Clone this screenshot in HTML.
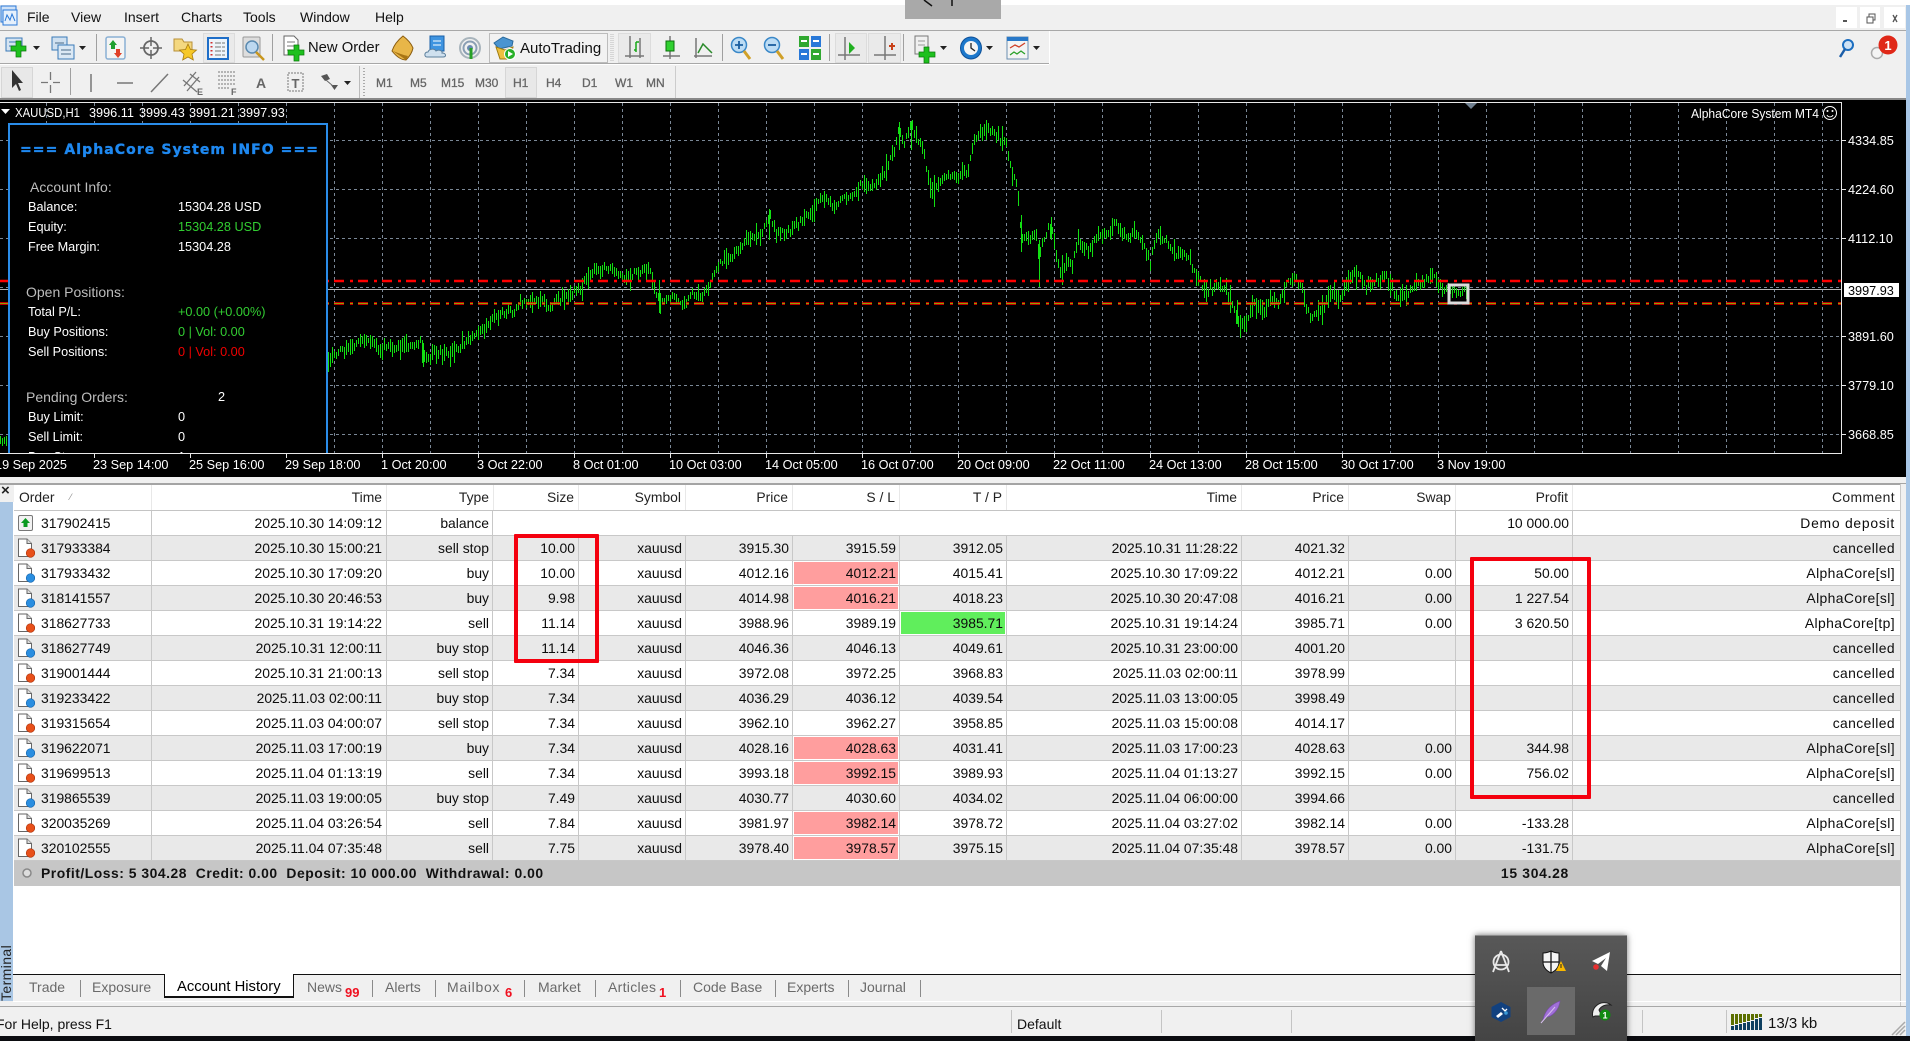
<!DOCTYPE html>
<html><head><meta charset="utf-8"><title>MT4</title>
<style>
html,body{margin:0;padding:0;width:1910px;height:1041px;overflow:hidden;background:#f0f0f0;font-family:"Liberation Sans",sans-serif;color:#000}
.a{position:absolute;white-space:nowrap}
.m{font-size:14px;top:9px;color:#111}
.tf{font-size:12px;top:76px;color:#666;-webkit-text-stroke:.3px #666}
#tb{position:absolute;left:14px;top:511px;border-collapse:separate;border-spacing:0;table-layout:fixed;width:1886px;font-size:13.9px}
#tb td{height:25px;box-sizing:border-box;padding:0 3px 1px 0;text-align:right;border-right:1px solid #c8c8c8;border-bottom:1px solid #c8c8c8;overflow:hidden;white-space:nowrap;color:#0c0c0c}
#tb tr:nth-child(even) td{background:#e9e9e9}
#tb td:last-child{border-right:0;padding-right:5px;letter-spacing:.4px}
#tb td:nth-child(2){padding-right:4px}
#tb td.o{text-align:left;padding-left:27px;position:relative}
#tb td.o svg{position:absolute;left:3px;top:2px}
#tb tr td.p{background:#ff9e9e;box-shadow:inset 0 0 0 1px #fff}
#tb tr td.g{background:#60ee5c;box-shadow:inset 0 0 0 1px #fff}
.h{position:absolute;top:485px;height:25px;line-height:25px;font-size:13.9px;text-align:right;box-sizing:border-box;padding-right:4px;border-right:1px solid #e8e8e8;color:#222}
.t{position:absolute;top:979px;font-size:14px;color:#6a6a6a;white-space:nowrap}
.r{position:absolute;font-size:13px;font-weight:bold;color:#f01020;top:985px}
.s{position:absolute;width:1px;top:980px;height:17px;background:#8a8a8a}
.st{position:absolute;width:1px;top:1010px;height:23px;background:#c4c4c4}
</style></head><body>
<svg width="0" height="0" style="position:absolute"><defs>
<symbol id="dr" viewBox="0 0 18 20"><path d="M1.5 1H10L14.500 5.500V18.500H1.500Z" fill="#fff" stroke="#666"/><path d="M10 1V5.500H14.500" fill="#ddd" stroke="#666"/><circle cx="13.500" cy="15" r="4.300" fill="#e8501a" stroke="#a83008" stroke-width=".6"/></symbol>
<symbol id="db" viewBox="0 0 18 20"><path d="M1.5 1H10L14.500 5.500V18.500H1.500Z" fill="#fff" stroke="#666"/><path d="M10 1V5.500H14.500" fill="#ddd" stroke="#666"/><circle cx="13.500" cy="15" r="4.300" fill="#2a8ee0" stroke="#1060a8" stroke-width=".6"/></symbol>
<symbol id="bl" viewBox="0 0 18 20"><rect x="1.500" y="2.500" width="14" height="15" rx="1.500" fill="#f2f2f2" stroke="#777"/><path d="M8.500 5L13 10H10.500V14H6.500V10H4Z" fill="#0a9a20"/></symbol>
</defs></svg>

<!-- window top -->
<div class="a" style="left:0;top:0;width:1910px;height:5px;background:#fff"></div>
<div class="a" style="left:905px;top:0;width:96px;height:19px;background:#a9a9a9"></div>
<div class="a" style="left:0;top:30px;width:1906px;height:1px;background:#a8a8a8"></div>
<div class="a" style="left:0;top:63px;width:1049px;height:1px;background:#a8a8a8"></div>
<div class="a" style="left:0;top:64px;width:1049px;height:1px;background:#fff"></div>
<div class="a" style="left:1049px;top:31px;width:1px;height:33px;background:#fff"></div>
<div class="a" style="left:0;top:98px;width:1906px;height:2px;background:#888"></div>
<div class="a" style="left:1906px;top:5px;width:4px;height:1036px;background:#a8c6e6"></div>
<div class="a" style="left:1836px;top:7px;width:21px;height:21px;background:#fff"></div>
<div class="a" style="left:1860px;top:7px;width:20px;height:21px;background:#fff"></div>
<div class="a" style="left:1884px;top:7px;width:21px;height:21px;background:#fff"></div>

<!-- menu -->
<div class="a m" style="left:27px">File</div><div class="a m" style="left:71px">View</div><div class="a m" style="left:124px">Insert</div><div class="a m" style="left:181px">Charts</div><div class="a m" style="left:243px">Tools</div><div class="a m" style="left:300px">Window</div><div class="a m" style="left:375px">Help</div>

<!-- toolbar buttons -->
<div class="a" style="left:203px;top:33px;width:30px;height:28px;background:#eaeaea;border:1px solid #dcdcdc"></div>
<div class="a" style="left:489px;top:33px;width:117px;height:28px;background:#f2f2f2;border:1px solid #bcbcbc"></div>
<div class="a" style="left:618px;top:33px;width:31px;height:28px;background:#eaeaea;border:1px solid #dcdcdc"></div>
<div class="a" style="left:835px;top:33px;width:30px;height:28px;background:#eaeaea;border:1px solid #dcdcdc"></div>
<div class="a" style="left:868px;top:33px;width:31px;height:28px;background:#eaeaea;border:1px solid #dcdcdc"></div>
<div class="a" style="left:1px;top:67px;width:30px;height:29px;background:#e8e8e8;border:1px solid #d6d6d6"></div>
<div class="a" style="left:505px;top:67px;width:30px;height:29px;background:#e8e8e8;border:1px solid #d6d6d6"></div>
<div class="a" style="left:308px;top:40px;font-size:14.800px;color:#111">New Order</div>
<div class="a" style="left:520px;top:40px;font-size:15px;color:#111">AutoTrading</div>
<div class="a tf" style="left:376px">M1</div><div class="a tf" style="left:410px">M5</div><div class="a tf" style="left:441px">M15</div><div class="a tf" style="left:475px">M30</div><div class="a tf" style="left:513px">H1</div><div class="a tf" style="left:546px">H4</div><div class="a tf" style="left:582px">D1</div><div class="a tf" style="left:615px">W1</div><div class="a tf" style="left:646px">MN</div>
<div class="a" style="left:256px;top:75px;font-size:14px;font-weight:bold;color:#666">A</div>

<svg class="a" style="left:0;top:0" width="1910" height="100" viewBox="0 0 1910 100">
<!-- magnifier fragment -->
<path d="M924 0L932 6M952 0V6" stroke="#111" stroke-width="1.500" fill="none"/>
<!-- app icon -->
<rect x="1" y="6" width="15" height="16" fill="#cfe2f8" stroke="#2a78d8"/><rect x="3" y="10" width="14" height="15" fill="#e6f0fc" stroke="#2a78d8"/><path d="M5 21l2-6 3 5 2-6 3 7" stroke="#2a78d8" fill="none"/>
<!-- window glyphs -->
<rect x="1843" y="20" width="4" height="2" fill="#555"/><path d="M1867 17h6v6h-6zM1869 17v-3h6v6h-2" fill="none" stroke="#555"/><path d="M1893 15l4 7M1897 15l-4 7" stroke="#555" stroke-width="1.300"/>
<!-- new chart -->
<rect x="6" y="38" width="16" height="13" fill="#d5e4f2" stroke="#3a7ab8"/><path d="M9 42h9M9 46h6" stroke="#3a7ab8"/><path d="M16 41h5v5h5v5h-5v6h-5v-6h-5v-5h5z" fill="#1ec01e" stroke="#0a7a0a" stroke-width=".7"/>
<path d="M33 46h7l-3.500 4z" fill="#222"/>
<!-- profiles -->
<rect x="52" y="37" width="15" height="13" fill="#cfe0f0" stroke="#3a7ab8"/><rect x="58" y="45" width="16" height="14" fill="#dbe8f4" stroke="#3a7ab8"/><path d="M55 43h9M61 50h10M61 54h10" stroke="#4a6a88"/>
<path d="M79 46h7l-3.500 4z" fill="#222"/>
<path d="M96.500 34V61M272.500 34V61M722.500 34V61M829.500 34V61M903.500 34V61" stroke="#a0a0a0"/>
<path d="M611 34V61M613 34V61" stroke="#bbb" stroke-dasharray="1 1"/>
<!-- market watch -->
<rect x="106" y="37" width="19" height="22" rx="2" fill="#f4f4f4" stroke="#8ab0d4" stroke-width="1.500"/><path d="M113 40l4 5h-2v4h-4v-4h-2z" fill="#20a030"/><path d="M118 58l-4-5h2v-4h4v4h2z" fill="#e04028"/>
<!-- navigator -->
<circle cx="151" cy="48" r="7" fill="none" stroke="#666" stroke-width="1.800"/><path d="M151 37v22M140 48h22" stroke="#666" stroke-width="1.500"/><circle cx="151" cy="48" r="2" fill="#f0f0f0"/>
<!-- star folder -->
<path d="M174 39h8l2 3h8v9h-18z" fill="#f4d880" stroke="#b89038"/><path d="M188 44l2.500 5.500 6 .6-4.500 4 1.300 5.900-5.300-3-5.300 3 1.300-5.900-4.500-4 6-.6z" fill="#f6c828" stroke="#a87c10" stroke-width=".8"/>
<!-- data window -->
<rect x="208" y="38" width="20" height="21" fill="#eef4fa" stroke="#1e6ec8" stroke-width="2"/><path d="M215 43h10M215 47h10M215 51h10M215 55h10" stroke="#777" stroke-dasharray="6 1"/><path d="M211.500 42v14" stroke="#d03030" stroke-dasharray="1.500 2.500" stroke-width="2"/>
<!-- tester -->
<rect x="243" y="37" width="17" height="20" rx="1" fill="#ddd" stroke="#999"/><circle cx="252" cy="47" r="6" fill="#bcd8f0" stroke="#5a8ab0" stroke-width="1.500"/><path d="M256 52l8 8" stroke="#c8961e" stroke-width="2.500"/>
<!-- new order -->
<path d="M284 36h10l4 4v15h-14z" fill="#fff" stroke="#666"/><path d="M287 42h8M287 46h8M287 50h6" stroke="#777"/><path d="M294 45h5v5h5v5h-5v6h-5v-6h-6v-5h6z" fill="#1ec01e" stroke="#0a7a0a" stroke-width=".7"/>
<!-- gold -->
<path d="M392 51c2-6 6-11 11-15 4 3 8 7 10 12-1 5-4 9-7 12-5 0-10-4-14-9z" fill="#e8b648" stroke="#8a5c10"/><path d="M393 51c4 3 9 6 13 9l2-4c-5-1-10-3-15-5z" fill="#a87414"/>
<!-- cloud -->
<rect x="430" y="36" width="14" height="15" fill="#3f94e0" stroke="#1a60a8"/><path d="M433 41h8M433 45h8" stroke="#fff"/><path d="M427 57c-3 0-3-5 1-5 1-3 6-4 8-1 3-2 7 0 6 2 4 0 5 4 1 4z" fill="#cfe0ee" stroke="#5c7f9c"/>
<!-- signals -->
<circle cx="470" cy="48" r="10" fill="none" stroke="#a8b4bc" stroke-width="2"/><circle cx="470" cy="48" r="6.500" fill="none" stroke="#8a9eb4" stroke-width="2"/><circle cx="470" cy="48" r="3" fill="#6a8ab0"/><path d="M471 48V59" stroke="#28a028" stroke-width="3"/>
<!-- autotrading -->
<path d="M494 43l9-6 10 4-1 5-13 3z" fill="#4a94d0" stroke="#2a6a9c"/><path d="M496 47l4 12h10l3-12-8 3z" fill="#eec040" stroke="#a07c10"/><circle cx="510" cy="54" r="5.500" fill="#28b028" stroke="#fff"/><path d="M508 51l5 3-5 3z" fill="#fff"/>
<!-- chart modes -->
<path d="M630 36V58M625 56H644M640 38V58" stroke="#777" stroke-width="1.500" fill="none"/><path d="M634 50h2M636 42V52M636 42h3" stroke="#18a818" stroke-width="1.500" fill="none"/>
<path d="M663 56H680M670 36V41M670 51V59" stroke="#777" stroke-width="1.500"/><rect x="666" y="41" width="8" height="10" fill="#30d030" stroke="#0a700a"/>
<path d="M696 38V58M694 56H712" stroke="#777" stroke-width="1.500"/><path d="M698 53l5-9 4 4 5 5" fill="none" stroke="#2a8a2a" stroke-width="1.500"/>
<!-- zooms -->
<circle cx="739" cy="45" r="7.500" fill="#bcdcf4" stroke="#3a88c8" stroke-width="1.500"/><path d="M735 45h8M739 41v8" stroke="#1a5ea0" stroke-width="1.800"/><path d="M744 51l6 8" stroke="#d0a028" stroke-width="3"/>
<circle cx="772" cy="45" r="7.500" fill="#bcdcf4" stroke="#3a88c8" stroke-width="1.500"/><path d="M768 45h8" stroke="#1a5ea0" stroke-width="1.800"/><path d="M777 51l6 8" stroke="#d0a028" stroke-width="3"/>
<rect x="799" y="36" width="10" height="11" fill="#30a830"/><rect x="811" y="36" width="10" height="11" fill="#2878d8"/><rect x="799" y="49" width="10" height="11" fill="#2878d8"/><rect x="811" y="49" width="10" height="11" fill="#30a830"/><path d="M801 41h6M813 41h6M801 54h6M813 54h6" stroke="#fff" stroke-width="2"/>
<path d="M845 37V60M838 55H860" stroke="#777" stroke-width="1.500"/><path d="M849 42l6 6-6 6z" fill="#20b020"/>
<path d="M885 36V60M874 55H896" stroke="#777" stroke-width="1.500"/><path d="M889 46h6M892 43v7" stroke="#c84018" stroke-width="2"/>
<!-- add indicator -->
<rect x="915" y="36" width="13" height="18" fill="#f0f0f0" stroke="#777"/><path d="M918 41h7M918 45h7" stroke="#999"/><path d="M924 47h5v5h6v5h-6v6h-5v-6h-5v-5h5z" fill="#1ec01e" stroke="#0a7a0a" stroke-width=".7"/>
<path d="M940 46h7l-3.500 4z" fill="#222"/>
<ellipse cx="971" cy="48" rx="10.500" ry="11" fill="#1c78cc" stroke="#0e5098"/><circle cx="971" cy="48" r="7" fill="#f4f4f4"/><path d="M971 43v5l4 3" stroke="#222" fill="none" stroke-width="1.300"/>
<path d="M986 46h7l-3.500 4z" fill="#222"/>
<rect x="1007" y="37" width="21" height="22" fill="#f4f4f4" stroke="#6a8eb0"/><rect x="1007" y="37" width="21" height="4" fill="#2878c8"/><path d="M1010 48l5-3 4 2 6-4" stroke="#d04028" fill="none" stroke-width="1.300"/><path d="M1010 55l4-3 3 2 4-3 4 3" stroke="#28a028" fill="none" stroke-width="1.300"/>
<path d="M1033 46h7l-3.500 4z" fill="#222"/>
<!-- search & notification -->
<circle cx="1848" cy="45" r="5" fill="#cfe2f4" stroke="#1c6ec0" stroke-width="2"/><path d="M1845 49l-5 8" stroke="#1c5ea8" stroke-width="2.500"/>
<circle cx="1877" cy="53" r="5.500" fill="#f4f4f4" stroke="#aaa" stroke-width="1.500"/><circle cx="1888" cy="45" r="9.500" fill="#e02818"/>
<text x="1888" y="50" font-family="Liberation Sans" font-size="13" font-weight="bold" fill="#fff" text-anchor="middle">1</text>
<!-- toolbar 2 -->
<path d="M12 70V88L16 84L19 91L21 90L18 83H23Z" fill="#333"/>
<path d="M50.500 72V80M50.500 85V93M41 82.500H48M53 82.500H60" stroke="#777" stroke-width="1.300"/>
<path d="M70.500 68V95" stroke="#a0a0a0"/><path d="M91 74V92" stroke="#777" stroke-width="1.500"/><path d="M117 83H133" stroke="#777" stroke-width="1.500"/><path d="M151 92L168 74" stroke="#777" stroke-width="1.500"/>
<path d="M184 86L196 72M187 91L199 77M183 80l14 12M190 74l10 8" stroke="#777" stroke-width="1.300" fill="none"/>
<text x="197" y="95" font-family="Liberation Sans" font-size="9" font-weight="bold" fill="#666">E</text>
<path d="M218 72H236M218 76H236M218 80H236M218 84H236M218 88H230" stroke="#777" stroke-dasharray="2 1"/>
<text x="231" y="95" font-family="Liberation Sans" font-size="9" font-weight="bold" fill="#666">F</text>
<rect x="288" y="73" width="15" height="18" fill="none" stroke="#777" stroke-dasharray="2 1"/>
<text x="295.500" y="88" font-family="Liberation Sans" font-size="13" font-weight="bold" fill="#666" text-anchor="middle">T</text>
<path d="M321 76l6-2 3 5-5 2zM331 85h7l-3.500 5z" fill="#555"/><path d="M326 80l7 6" stroke="#666"/>
<path d="M344 81h7l-3.500 4z" fill="#222"/>
<path d="M359.500 66V98" stroke="#bbb"/><path d="M364 68V96" stroke="#aaa" stroke-dasharray="1 2" stroke-width="2"/><path d="M675.500 66V98" stroke="#ccc"/>
</svg>

<!-- chart -->
<svg class="a" id="ch" style="left:0;top:100px" width="1906" height="377" viewBox="0 100 1906 377">
<rect x="0" y="100" width="1906" height="377" fill="#000"/>
<path d="M0 102.500H1841.500V453.500H0" fill="none" stroke="#e8e8e8"/>
<g id="grid" stroke="#7a8796" stroke-dasharray="3 3" fill="none">
<path d="M0 140.500H1841M0 189.500H1841M0 238.500H1841M0 287.500H1841M0 336.500H1841M0 385.500H1841M0 434.500H1841"/>
<path d="M46.500 103V453M94.500 103V453M142.500 103V453M190.500 103V453M238.500 103V453M286.500 103V453M334.500 103V453M382.500 103V453M430.500 103V453M478.500 103V453M526.500 103V453M574.500 103V453M622.500 103V453M670.500 103V453M718.500 103V453M766.500 103V453M814.500 103V453M862.500 103V453M910.500 103V453M958.500 103V453M1006.500 103V453M1054.500 103V453M1102.500 103V453M1150.500 103V453M1198.500 103V453M1246.500 103V453M1294.500 103V453M1342.500 103V453M1390.500 103V453M1438.500 103V453M1486.500 103V453M1534.500 103V453M1582.500 103V453M1630.500 103V453M1678.500 103V453M1726.500 103V453M1774.500 103V453M1822.500 103V453"/>
</g>
<path d="M0 289.500H1841" stroke="#b4b4b4"/>
<path id="bars" d="" stroke="#12e012" stroke-width="1" fill="none"/>
<path d="M-2 281H1841M-2 303.500H1841" stroke="#ff0000" stroke-width="2.400" stroke-dasharray="10 6 3 5"/>
<path d="M-2 303.500H1841" stroke="#8fa000" stroke-width="1" stroke-dasharray="10 6 3 5"/>
<rect x="1449" y="285" width="19" height="18" fill="none" stroke="#dcdcdc" stroke-width="3"/>
<path d="M1465 103h12l-6 6z" fill="#708090"/>
<path d="M94.500 454V458M190.500 454V458M286.500 454V458M382.500 454V458M478.500 454V458M574.500 454V458M670.500 454V458M766.500 454V458M862.500 454V458M958.500 454V458M1054.500 454V458M1150.500 454V458M1246.500 454V458M1342.500 454V458M1438.500 454V458" stroke="#e8e8e8"/>
<path d="M1842 140.500h4M1842 189.500h4M1842 238.500h4M1842 336.500h4M1842 385.500h4M1842 434.500h4" stroke="#e8e8e8"/>
<g font-family="Liberation Sans" font-size="12.700" fill="#fff">
<path d="M1 109h9l-4.500 5z" fill="#fff"/>
<text x="15" y="117" textLength="65" lengthAdjust="spacingAndGlyphs">XAUUSD,H1</text>
<text x="89" y="117">3996.11</text><text x="139" y="117">3999.43</text><text x="189" y="117">3991.21</text><text x="239" y="117">3997.93</text>
<text x="1691" y="118" textLength="128" lengthAdjust="spacingAndGlyphs">AlphaCore System MT4</text>
<g fill="none" stroke="#fff"><circle cx="1830" cy="113" r="6.500"/><path d="M1827 115c1 2.500 5 2.500 6 0"/></g><circle cx="1827.500" cy="111" r="1" fill="#fff"/><circle cx="1832.500" cy="111" r="1" fill="#fff"/>
<text x="1848" y="145">4334.85</text><text x="1848" y="194">4224.60</text><text x="1848" y="243">4112.10</text><text x="1848" y="341">3891.60</text><text x="1848" y="390">3779.10</text><text x="1848" y="439">3668.85</text>
<text x="67" y="469" text-anchor="end">19 Sep 2025</text>
<text x="93" y="469">23 Sep 14:00</text><text x="189" y="469">25 Sep 16:00</text><text x="285" y="469">29 Sep 18:00</text><text x="381" y="469">1 Oct 20:00</text><text x="477" y="469">3 Oct 22:00</text><text x="573" y="469">8 Oct 01:00</text><text x="669" y="469">10 Oct 03:00</text><text x="765" y="469">14 Oct 05:00</text><text x="861" y="469">16 Oct 07:00</text><text x="957" y="469">20 Oct 09:00</text><text x="1053" y="469">22 Oct 11:00</text><text x="1149" y="469">24 Oct 13:00</text><text x="1245" y="469">28 Oct 15:00</text><text x="1341" y="469">30 Oct 17:00</text><text x="1437" y="469">3 Nov 19:00</text>
<rect x="1844" y="283" width="55" height="14" fill="#fff"/><text x="1848" y="295" fill="#000">3997.93</text>
</g>
<!-- info panel -->
<svg x="8" y="123" width="321" height="330" viewBox="8 123 321 330">
<rect x="9" y="124" width="318" height="340" fill="#000" stroke="#2a8ce8" stroke-width="2"/>
<g font-family="Liberation Sans" font-size="12.700" fill="#fff">
<text x="20" y="154" font-family="DejaVu Sans" font-size="14" font-weight="bold" fill="#1e88f0" stroke="#1e88f0" stroke-width=".35" textLength="298" lengthAdjust="spacing">=== AlphaCore System INFO ===</text>
<text x="30" y="192" font-size="14" fill="#bdbdbd">Account Info:</text>
<text x="28" y="211">Balance:</text><text x="178" y="211">15304.28 USD</text>
<text x="28" y="231">Equity:</text><text x="178" y="231" fill="#32cd32">15304.28 USD</text>
<text x="28" y="251">Free Margin:</text><text x="178" y="251">15304.28</text>
<text x="26" y="297" font-size="14" fill="#bdbdbd">Open Positions:</text>
<text x="28" y="316">Total P/L:</text><text x="178" y="316" fill="#32cd32">+0.00 (+0.00%)</text>
<text x="28" y="336">Buy Positions:</text><text x="178" y="336" fill="#32cd32">0 | Vol: 0.00</text>
<text x="28" y="356">Sell Positions:</text><text x="178" y="356" fill="#f00000">0 | Vol: 0.00</text>
<text x="26" y="402" font-size="14" fill="#bdbdbd">Pending Orders:</text><text x="218" y="401">2</text>
<text x="28" y="421">Buy Limit:</text><text x="178" y="421">0</text>
<text x="28" y="441">Sell Limit:</text><text x="178" y="441">0</text>
<text x="28" y="461">Buy Stop:</text><text x="178" y="461">1</text>
</g></svg>
</svg>

<!-- terminal -->
<div class="a" style="left:0;top:484px;width:1900px;height:490px;background:#fff"></div>
<div class="a" style="left:0;top:483px;width:1906px;height:2px;background:#a4a4a4"></div>
<div class="a" style="left:0;top:485px;width:14px;height:17px;background:#f0f0f0"></div>
<div class="a" style="left:1px;top:482px;font-size:15px;font-weight:bold;color:#222">×</div>
<div class="a" style="left:0;top:502px;width:13px;height:499px;background:#a9c6e4"></div>
<div class="a" style="left:-1px;top:1001px;transform-origin:0 0;transform:rotate(-90deg);font-size:14px;color:#222;letter-spacing:.4px;height:14px;line-height:14px">Terminal</div>
<div class="a" style="left:1900px;top:484px;width:6px;height:522px;background:#f0f0f0;border-left:1px solid #c8c8c8;box-sizing:border-box"></div>

<!-- header -->
<div class="a" style="left:14px;top:510px;width:1886px;height:1px;background:#c4c4c4"></div>
<div class="h" style="left:14px;width:138px;text-align:left;padding-left:5px">Order</div>
<div class="a" style="left:70px;top:492px;font-size:9px;color:#888">⁄</div>
<div class="h" style="left:152px;width:235px">Time</div>
<div class="h" style="left:387px;width:107px">Type</div>
<div class="h" style="left:494px;width:85px">Size</div>
<div class="h" style="left:579px;width:107px">Symbol</div>
<div class="h" style="left:686px;width:107px">Price</div>
<div class="h" style="left:793px;width:107px">S / L</div>
<div class="h" style="left:900px;width:107px">T / P</div>
<div class="h" style="left:1007px;width:235px">Time</div>
<div class="h" style="left:1242px;width:107px">Price</div>
<div class="h" style="left:1349px;width:107px">Swap</div>
<div class="h" style="left:1456px;width:117px">Profit</div>
<div class="h" style="left:1573px;width:327px;border-right:0;padding-right:5px;letter-spacing:.4px">Comment</div>

<table id="tb"><colgroup><col style="width:138px"><col style="width:235px"><col style="width:106px"><col style="width:86px"><col style="width:107px"><col style="width:107px"><col style="width:107px"><col style="width:107px"><col style="width:235px"><col style="width:107px"><col style="width:107px"><col style="width:117px"><col style="width:327px"></colgroup>
<tr><td class="o"><svg width="18" height="20"><use href="#bl"/></svg>317902415</td><td>2025.10.30 14:09:12</td><td>balance</td><td colspan="8"></td><td>10 000.00</td><td style="letter-spacing:.75px">Demo deposit</td></tr>
<tr><td class="o"><svg width="18" height="20"><use href="#dr"/></svg>317933384</td><td>2025.10.30 15:00:21</td><td>sell stop</td><td>10.00</td><td>xauusd</td><td>3915.30</td><td>3915.59</td><td>3912.05</td><td>2025.10.31 11:28:22</td><td>4021.32</td><td></td><td></td><td>cancelled</td></tr>
<tr><td class="o"><svg width="18" height="20"><use href="#db"/></svg>317933432</td><td>2025.10.30 17:09:20</td><td>buy</td><td>10.00</td><td>xauusd</td><td>4012.16</td><td class="p">4012.21</td><td>4015.41</td><td>2025.10.30 17:09:22</td><td>4012.21</td><td>0.00</td><td>50.00</td><td>AlphaCore[sl]</td></tr>
<tr><td class="o"><svg width="18" height="20"><use href="#db"/></svg>318141557</td><td>2025.10.30 20:46:53</td><td>buy</td><td>9.98</td><td>xauusd</td><td>4014.98</td><td class="p">4016.21</td><td>4018.23</td><td>2025.10.30 20:47:08</td><td>4016.21</td><td>0.00</td><td>1 227.54</td><td>AlphaCore[sl]</td></tr>
<tr><td class="o"><svg width="18" height="20"><use href="#dr"/></svg>318627733</td><td>2025.10.31 19:14:22</td><td>sell</td><td>11.14</td><td>xauusd</td><td>3988.96</td><td>3989.19</td><td class="g">3985.71</td><td>2025.10.31 19:14:24</td><td>3985.71</td><td>0.00</td><td>3 620.50</td><td>AlphaCore[tp]</td></tr>
<tr><td class="o"><svg width="18" height="20"><use href="#db"/></svg>318627749</td><td>2025.10.31 12:00:11</td><td>buy stop</td><td>11.14</td><td>xauusd</td><td>4046.36</td><td>4046.13</td><td>4049.61</td><td>2025.10.31 23:00:00</td><td>4001.20</td><td></td><td></td><td>cancelled</td></tr>
<tr><td class="o"><svg width="18" height="20"><use href="#dr"/></svg>319001444</td><td>2025.10.31 21:00:13</td><td>sell stop</td><td>7.34</td><td>xauusd</td><td>3972.08</td><td>3972.25</td><td>3968.83</td><td>2025.11.03 02:00:11</td><td>3978.99</td><td></td><td></td><td>cancelled</td></tr>
<tr><td class="o"><svg width="18" height="20"><use href="#db"/></svg>319233422</td><td>2025.11.03 02:00:11</td><td>buy stop</td><td>7.34</td><td>xauusd</td><td>4036.29</td><td>4036.12</td><td>4039.54</td><td>2025.11.03 13:00:05</td><td>3998.49</td><td></td><td></td><td>cancelled</td></tr>
<tr><td class="o"><svg width="18" height="20"><use href="#dr"/></svg>319315654</td><td>2025.11.03 04:00:07</td><td>sell stop</td><td>7.34</td><td>xauusd</td><td>3962.10</td><td>3962.27</td><td>3958.85</td><td>2025.11.03 15:00:08</td><td>4014.17</td><td></td><td></td><td>cancelled</td></tr>
<tr><td class="o"><svg width="18" height="20"><use href="#db"/></svg>319622071</td><td>2025.11.03 17:00:19</td><td>buy</td><td>7.34</td><td>xauusd</td><td>4028.16</td><td class="p">4028.63</td><td>4031.41</td><td>2025.11.03 17:00:23</td><td>4028.63</td><td>0.00</td><td>344.98</td><td>AlphaCore[sl]</td></tr>
<tr><td class="o"><svg width="18" height="20"><use href="#dr"/></svg>319699513</td><td>2025.11.04 01:13:19</td><td>sell</td><td>7.34</td><td>xauusd</td><td>3993.18</td><td class="p">3992.15</td><td>3989.93</td><td>2025.11.04 01:13:27</td><td>3992.15</td><td>0.00</td><td>756.02</td><td>AlphaCore[sl]</td></tr>
<tr><td class="o"><svg width="18" height="20"><use href="#db"/></svg>319865539</td><td>2025.11.03 19:00:05</td><td>buy stop</td><td>7.49</td><td>xauusd</td><td>4030.77</td><td>4030.60</td><td>4034.02</td><td>2025.11.04 06:00:00</td><td>3994.66</td><td></td><td></td><td>cancelled</td></tr>
<tr><td class="o"><svg width="18" height="20"><use href="#dr"/></svg>320035269</td><td>2025.11.04 03:26:54</td><td>sell</td><td>7.84</td><td>xauusd</td><td>3981.97</td><td class="p">3982.14</td><td>3978.72</td><td>2025.11.04 03:27:02</td><td>3982.14</td><td>0.00</td><td>-133.28</td><td>AlphaCore[sl]</td></tr>
<tr><td class="o"><svg width="18" height="20"><use href="#dr"/></svg>320102555</td><td>2025.11.04 07:35:48</td><td>sell</td><td>7.75</td><td>xauusd</td><td>3978.40</td><td class="p">3978.57</td><td>3975.15</td><td>2025.11.04 07:35:48</td><td>3978.57</td><td>0.00</td><td>-131.75</td><td>AlphaCore[sl]</td></tr>
</table>

<!-- total -->
<div class="a" style="left:14px;top:861px;width:1886px;height:25px;background:#c6c6c6"></div>
<svg class="a" style="left:21px;top:867px" width="12" height="12"><circle cx="6" cy="6" r="4" fill="#ddd" stroke="#888" stroke-width="1.500"/></svg>
<div class="a" style="left:41px;top:865px;font-size:13.900px;font-weight:bold;color:#111;letter-spacing:.52px">Profit/Loss: 5 304.28&nbsp;&nbsp;Credit: 0.00&nbsp;&nbsp;Deposit: 10 000.00&nbsp;&nbsp;Withdrawal: 0.00</div>
<div class="a" style="left:1456px;width:113px;top:865px;font-size:13.900px;font-weight:bold;color:#111;text-align:right;letter-spacing:.7px">15 304.28</div>

<!-- red annotation boxes -->
<div class="a" style="left:514px;top:534px;width:85px;height:129px;box-sizing:border-box;border:4px solid #f4000e;border-radius:1px"></div>
<div class="a" style="left:1470px;top:557px;width:121px;height:242px;box-sizing:border-box;border:4px solid #f4000e;border-radius:1px"></div>

<!-- tabs -->
<div class="a" style="left:13px;top:974px;width:887px;height:32px;background:#f0f0f0"></div>
<div class="a" style="left:13px;top:974px;width:151px;height:1px;background:#111"></div>
<div class="a" style="left:294px;top:974px;width:1607px;height:1px;background:#111"></div>
<div class="a" style="left:164px;top:974px;width:130px;height:24px;box-sizing:border-box;background:#fff;border-left:1px solid #111;border-right:1px solid #111;border-bottom:2px solid #111"></div>
<div class="a" style="left:900px;top:975px;width:1000px;height:31px;background:#f0f0f0"></div>
<div class="a" style="left:13px;top:1001px;width:1893px;height:1px;background:#fff"></div>
<div class="a" style="left:0;top:1006px;width:1906px;height:1px;background:#a8a8a8"></div>
<div class="t" style="left:29px">Trade</div><div class="s" style="left:80px"></div>
<div class="t" style="left:92px">Exposure</div>
<div class="t" style="left:177px;color:#000;font-size:14.800px">Account History</div>
<div class="t" style="left:307px">News</div><div class="r" style="left:345px">99</div><div class="s" style="left:372px"></div>
<div class="t" style="left:385px">Alerts</div><div class="s" style="left:435px"></div>
<div class="t" style="left:447px;letter-spacing:.7px">Mailbox</div><div class="r" style="left:505px">6</div><div class="s" style="left:524px"></div>
<div class="t" style="left:538px">Market</div><div class="s" style="left:595px"></div>
<div class="t" style="left:608px;letter-spacing:.3px">Articles</div><div class="r" style="left:659px">1</div><div class="s" style="left:680px"></div>
<div class="t" style="left:693px">Code Base</div><div class="s" style="left:775px"></div>
<div class="t" style="left:787px">Experts</div><div class="s" style="left:848px"></div>
<div class="t" style="left:860px">Journal</div><div class="s" style="left:920px"></div>

<!-- status -->
<div class="a" style="left:-4px;top:1016px;font-size:14px;color:#111">For Help, press F1</div>
<div class="st" style="left:1011px"></div><div class="a" style="left:1017px;top:1016px;font-size:14px;color:#111">Default</div>
<div class="st" style="left:1161px"></div><div class="st" style="left:1291px"></div><div class="st" style="left:1642px"></div><div class="st" style="left:1726px"></div>
<svg class="a" style="left:1731px;top:1013px" width="32" height="18">
<g fill="#5c7000"><rect x="0" y="1" width="3" height="11"/><rect x="4" y="1" width="3" height="10"/><rect x="8" y="1" width="3" height="9"/><rect x="12" y="1" width="3" height="8"/><rect x="16" y="1" width="3" height="7"/><rect x="20" y="1" width="3" height="6"/><rect x="24" y="1" width="3" height="4"/><rect x="28" y="1" width="3" height="3"/></g>
<g fill="#0e3f60"><rect x="0" y="13" width="3" height="4"/><rect x="4" y="12" width="3" height="5"/><rect x="8" y="11" width="3" height="6"/><rect x="12" y="10" width="3" height="7"/><rect x="16" y="9" width="3" height="8"/><rect x="20" y="8" width="3" height="9"/><rect x="24" y="6" width="3" height="11"/><rect x="28" y="5" width="3" height="12"/></g></svg>
<div class="a" style="left:1768px;top:1015px;font-size:15px;color:#111">13/3 kb</div>
<svg class="a" style="left:1890px;top:1020px" width="16" height="16"><path d="M15 2L2 15M15 6L6 15M15 10L10 15" stroke="#aaa" stroke-width="1.500"/></svg>

<!-- taskbar -->
<div class="a" style="left:0;top:1036px;width:1910px;height:5px;background:#0b0c10"></div>

<!-- tray popup -->
<div class="a" style="left:1475px;top:935px;width:152px;height:106px;background:linear-gradient(#585858,#4c4c4c 60%,#444);box-shadow:0 0 6px rgba(0,0,0,.55);border-top:1px solid #8c8c8c;box-sizing:border-box"></div>
<div class="a" style="left:1527px;top:987px;width:48px;height:48px;background:#6a6a6a"></div>
<svg class="a" style="left:1475px;top:935px" width="152" height="106" viewBox="1475 935 152 106">
<g fill="none" stroke="#e8e8e8" stroke-width="1.800"><circle cx="1501" cy="962" r="7.500"/><path d="M1501 951L1493 972M1501 951L1509 972M1494 965H1508"/></g>
<path d="M1543 953c3 0 6-1 8-2 2 1 5 2 8 2v9c0 6-4 9-8 11-4-2-8-5-8-11z" fill="#f4f4f4" stroke="#111"/><path d="M1551 951V973M1543 962H1559" stroke="#111" stroke-width="1.300"/><path d="M1556 971L1561 961L1566 971Z" fill="#f8b800"/><path d="M1561 964v4" stroke="#222"/>
<path d="M1610 952L1592 961L1598 964L1606 958L1601 966L1607 971Z" fill="#fff"/><circle cx="1596" cy="967" r="2.800" fill="#e83030"/>
<path d="M1501 1002l9.500 5v10l-9.500 5-9.500-5v-10z" fill="#12417f"/><path d="M1496 1016l5-4 2 2-5 4z" fill="#fff"/><path d="M1502 1008l3 3 2-2" stroke="#fff" stroke-width="1.300" fill="none"/><circle cx="1506" cy="1013" r="1.800" fill="#3a9ad8"/>
<path d="M1543 1020C1545 1010 1552 1004 1560 1001C1559 1010 1552 1017 1546 1017Z" fill="#a070d8" stroke="#7a48b0" stroke-width=".6"/><path d="M1541 1023L1555 1007" stroke="#d8c0f0"/>
<path d="M1593 1017c-2-6 2-12 8-14 4-1 8 0 10 2-5-1-10 1-12 5l3 6h-7z" fill="#f0f0f0" stroke="#222"/><circle cx="1605" cy="1015" r="5.500" fill="#108a10"/>
<text x="1605" y="1018.500" font-family="Liberation Sans" font-size="9" font-weight="bold" fill="#fff" text-anchor="middle">1</text>
</svg>

<script>
(function(){
var K=[[328,362],[340,352],[352,346],[363,339],[375,347],[400,348],[420,342],[423,360],[435,352],[450,356],[469,340],[486,327],[496,315],[514,313],[519,303],[544,303],[549,310],[557,300],[580,290],[590,273],[611,267],[623,280],[636,273],[649,268],[659,303],[672,297],[685,303],[692,290],[700,297],[710,283],[715,267],[733,255],[748,238],[761,233],[769,215],[776,233],[789,232],[802,222],[812,210],[825,197],[832,205],[845,198],[861,185],[871,187],[884,172],[894,150],[899,127],[904,143],[911,127],[919,140],[924,157],[929,183],[934,193],[942,180],[950,175],[960,178],[968,170],[973,143],[986,127],[996,135],[1006,143],[1011,170],[1016,180],[1019,207],[1021,240],[1037,235],[1039,262],[1042,240],[1051,225],[1057,260],[1062,277],[1067,260],[1072,267],[1077,240],[1088,252],[1098,237],[1108,235],[1113,223],[1126,237],[1132,233],[1142,243],[1150,263],[1157,233],[1165,240],[1175,253],[1187,255],[1195,273],[1205,290],[1224,287],[1232,303],[1237,320],[1240,330],[1247,323],[1253,303],[1264,313],[1269,300],[1279,303],[1287,280],[1294,278],[1302,290],[1307,310],[1312,317],[1322,310],[1326,300],[1334,290],[1339,300],[1346,283],[1356,272],[1366,287],[1374,282],[1386,277],[1394,293],[1406,297],[1416,283],[1433,278],[1441,285],[1451,290],[1458,295],[1466,290]];
var S=[[328,352,372],[423,343,367],[899,122,150],[911,121,150],[934,175,207],[986,120,140],[1021,215,252],[1039,240,287],[1051,217,240],[1062,255,285],[1240,315,338],[1322,295,325],[1356,267,290],[1406,285,304],[1237,300,324],[769,209,240],[659,280,313]];
var s=48271,p='',i=0;
function r(){s=(s*16807)%2147483647;return s/2147483647}
for(var x=328;x<=1466;x+=2){
 while(i<K.length-2&&x>K[i+1][0])i++;
 var a=K[i],b=K[i+1],t=(x-a[0])/(b[0]-a[0]),c=a[1]+(b[1]-a[1])*t+(r()-.5)*7,h=4+r()*r()*13;
 var up=c-h*(.5+r()*.5),lo=c+h*(.5+r()*.5);
 p+='M'+(x+.5)+' '+up.toFixed(0)+'V'+lo.toFixed(0);
}
for(i=0;i<S.length;i++)p+='M'+(S[i][0]+.5)+' '+S[i][1]+'V'+S[i][2];
for(x=0;x<8;x+=2)p+='M'+(x+.5)+' '+(436+x%3)+'V'+(444+x%4);
document.getElementById('bars').setAttribute('d',p);
})();
</script>
</body></html>
